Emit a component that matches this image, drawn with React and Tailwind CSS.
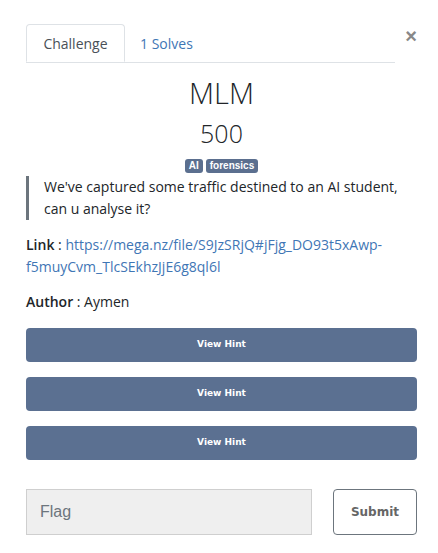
export default function App() {
  const hints = [1, 2, 3]
  const sans = { fontFamily: '"Liberation Sans", sans-serif' }
  return (
    <div className="w-[438px] h-[553px] bg-white text-[#212529] overflow-hidden" style={{ fontFamily: '"Open Sans", "Noto Sans", sans-serif' }}>
      <div className="pl-[26px] pr-[21px] pt-[24px]">
        {/* tabs + close */}
        <div className="flex items-start">
          <div className="flex flex-1 border-b border-[#dee2e6] mr-[10px]">
            <div className="h-[38px] w-[99px] -mb-px flex items-center justify-center border border-[#dee2e6] border-b-white rounded-t-[4px] text-[14px] text-[#495057]">
              Challenge
            </div>
            <div className="h-[38px] px-[15px] flex items-center text-[14px] text-[#3f76b5]">1 Solves</div>
          </div>
          <button className="text-[20px] leading-none text-[#888] font-bold mt-[2px]" style={sans}>×</button>
        </div>

        <h2 className="text-center text-[29px] font-light leading-none mt-[15px]">MLM</h2>
        <h3 className="text-center text-[25px] font-light leading-none mt-[14px]">500</h3>
        <div className="flex justify-center gap-[3px] mt-[13px]">
          <span className="bg-[#5b6f8f] text-white text-[10px] font-bold leading-none px-[4px] py-[2px] rounded-[3px]" style={sans}>AI</span>
          <span className="bg-[#5b6f8f] text-white text-[10px] font-bold leading-none px-[4px] py-[2px] rounded-[3px]" style={sans}>forensics</span>
        </div>

        <blockquote className="mt-[3px] border-l-[3px] border-[#6c757d] pl-[15px] text-[14px] leading-[22px]">
          We've captured some traffic destined to an AI student,
          <br />
          can u analyse it?
        </blockquote>

        <p className="mt-[14px] text-[14px] leading-[22px]">
          <b className="font-semibold">Link</b> :{' '}
          <span className="text-[#3f76b5]">
            https://mega.nz/file/S9JzSRjQ#jFjg_DO93t5xAwp-
            <br />
            f5muyCvm_TlcSEkhzJjE6g8ql6l
          </span>
        </p>

        <p className="mt-[13px] text-[14px] leading-[22px]">
          <b className="font-semibold">Author</b> : Aymen
        </p>

        <div className="mt-[15px] flex flex-col gap-[15px]">
          {hints.map((h) => (
            <button key={h} className="h-[34px] w-full rounded-[4px] bg-[#5b7091] text-white text-[9px] font-bold" style={{ fontFamily: '"DejaVu Sans", sans-serif' }}>
              View Hint
            </button>
          ))}
        </div>

        <div className="mt-[29px] flex gap-[21px]">
          <div className="h-[46px] flex-1 bg-[#efefef] border border-[#cfcfcf] flex items-center pl-[13px] text-[16px] text-[#6c757d]" style={sans}>
            Flag
          </div>
          <button className="h-[46px] w-[84px] border border-[#6c757d] rounded-[4px] text-[12px] font-bold text-[#666]" style={{ fontFamily: '"DejaVu Sans", sans-serif' }}>
            Submit
          </button>
        </div>
      </div>
    </div>
  )
}
